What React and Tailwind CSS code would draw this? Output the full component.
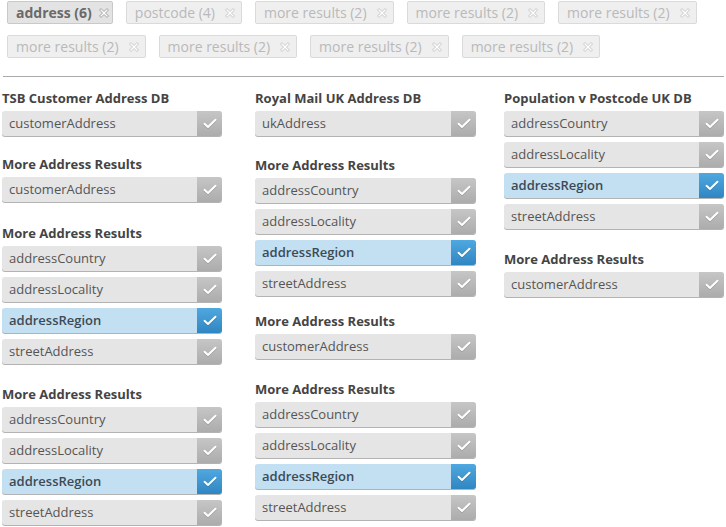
import React from "react";

const font = { fontFamily: '"Open Sans", "Liberation Sans", sans-serif' };

function XIcon({ active }) {
  return (
    <svg width="12" height="12" viewBox="0 0 12 12" className="shrink-0">
      <path
        d="M1.5 3 L3 1.5 L6 4.5 L9 1.5 L10.5 3 L7.5 6 L10.5 9 L9 10.5 L6 7.5 L3 10.5 L1.5 9 L4.5 6 Z"
        fill="#ffffff"
        stroke={active ? "#a0a0a0" : "#c8c8c8"}
        strokeWidth="1"
        strokeLinejoin="round"
      />
    </svg>
  );
}

function Chip({ label, active }) {
  return (
    <div
      className={
        "flex h-[23px] items-center rounded-[2px] border pl-[8px] text-[14px] " +
        (active
          ? "gap-[6px] border-[#c9c9c9] bg-[#e3e3e3] pr-[2px] font-bold text-[#6a6a6a]"
          : "gap-[9px] border-[#dadada] bg-[#efefef] pr-[5px] text-[#b9b9b9]")
      }
    >
      <span className="leading-none">{label}</span>
      <XIcon active={active} />
    </div>
  );
}

function Check() {
  return (
    <svg width="14" height="11" viewBox="0 0 14 11">
      <path
        d="M1.5 5.8 L5 9 L12.5 1.8"
        fill="none"
        stroke="rgba(0,0,0,0.15)"
        strokeWidth="2.2"
        strokeLinecap="round"
        strokeLinejoin="round"
        transform="translate(0,0.8)"
      />
      <path
        d="M1.5 5.8 L5 9 L12.5 1.8"
        fill="none"
        stroke="#ffffff"
        strokeWidth="2"
        strokeLinecap="round"
        strokeLinejoin="round"
      />
    </svg>
  );
}

function Item({ label, selected }) {
  return (
    <div
      className={
        "flex h-[25px] w-full overflow-hidden rounded-[3px] shadow-[0_1px_0_#b3b3b3] " +
        (selected ? "bg-[#c3dff2]" : "bg-[#e5e5e5]")
      }
    >
      <div
        className={
          "flex flex-1 items-center pl-[7px] text-[13px] " +
          (selected ? "font-semibold text-[#3d4a55]" : "text-[#555555]")
        }
      >
        {label}
      </div>
      <div
        className={
          "flex w-[25px] items-center justify-center " +
          (selected
            ? "bg-gradient-to-b from-[#50a8e0] to-[#2f86c2]"
            : "bg-gradient-to-b from-[#c6c6c6] to-[#acacac]")
        }
      >
        <Check />
      </div>
    </div>
  );
}

function Group({ title, items, mt }) {
  return (
    <div style={{ marginTop: mt }}>
      <div className="mb-[4px] h-[18px] text-[13px] font-bold leading-[18px] text-[#444444]">
        {title}
      </div>
      <div className="flex flex-col gap-[6px]">
        {items.map((it, i) => (
          <Item key={i} label={it.l} selected={it.s} />
        ))}
      </div>
    </div>
  );
}

const four = [
  { l: "addressCountry" },
  { l: "addressLocality" },
  { l: "addressRegion", s: true },
  { l: "streetAddress" },
];
const cust = [{ l: "customerAddress" }];

export default function App() {
  return (
    <div className="h-[527px] w-[726px] bg-white" style={font}>
      <div className="flex w-[720px] flex-wrap gap-x-[13px] gap-y-[11px] pl-[7px] pt-[1px]">
        <Chip label="address (6)" active />
        <Chip label="postcode (4)" />
        <Chip label="more results (2)" />
        <Chip label="more results (2)" />
        <Chip label="more results (2)" />
        <Chip label="more results (2)" />
        <Chip label="more results (2)" />
        <Chip label="more results (2)" />
        <Chip label="more results (2)" />
      </div>
      <div className="ml-[3px] mt-[18px] h-px w-[721px] bg-[#a9a9a9]" />
      <div className="mt-[12px] flex pl-[2px]">
        <div className="w-[220px]">
          <Group title="TSB Customer Address DB" items={cust} mt={0} />
          <Group title="More Address Results" items={cust} mt={19} />
          <Group title="More Address Results" items={four} mt={22} />
          <Group title="More Address Results" items={four} mt={21} />
        </div>
        <div className="ml-[33px] w-[221px]">
          <Group title="Royal Mail UK Address DB" items={[{ l: "ukAddress" }]} mt={0} />
          <Group title="More Address Results" items={four} mt={20} />
          <Group title="More Address Results" items={cust} mt={16} />
          <Group title="More Address Results" items={four} mt={21} />
        </div>
        <div className="ml-[28px] w-[220px]">
          <Group title="Population v Postcode UK DB" items={four} mt={0} />
          <Group title="More Address Results" items={cust} mt={21} />
        </div>
      </div>
    </div>
  );
}
